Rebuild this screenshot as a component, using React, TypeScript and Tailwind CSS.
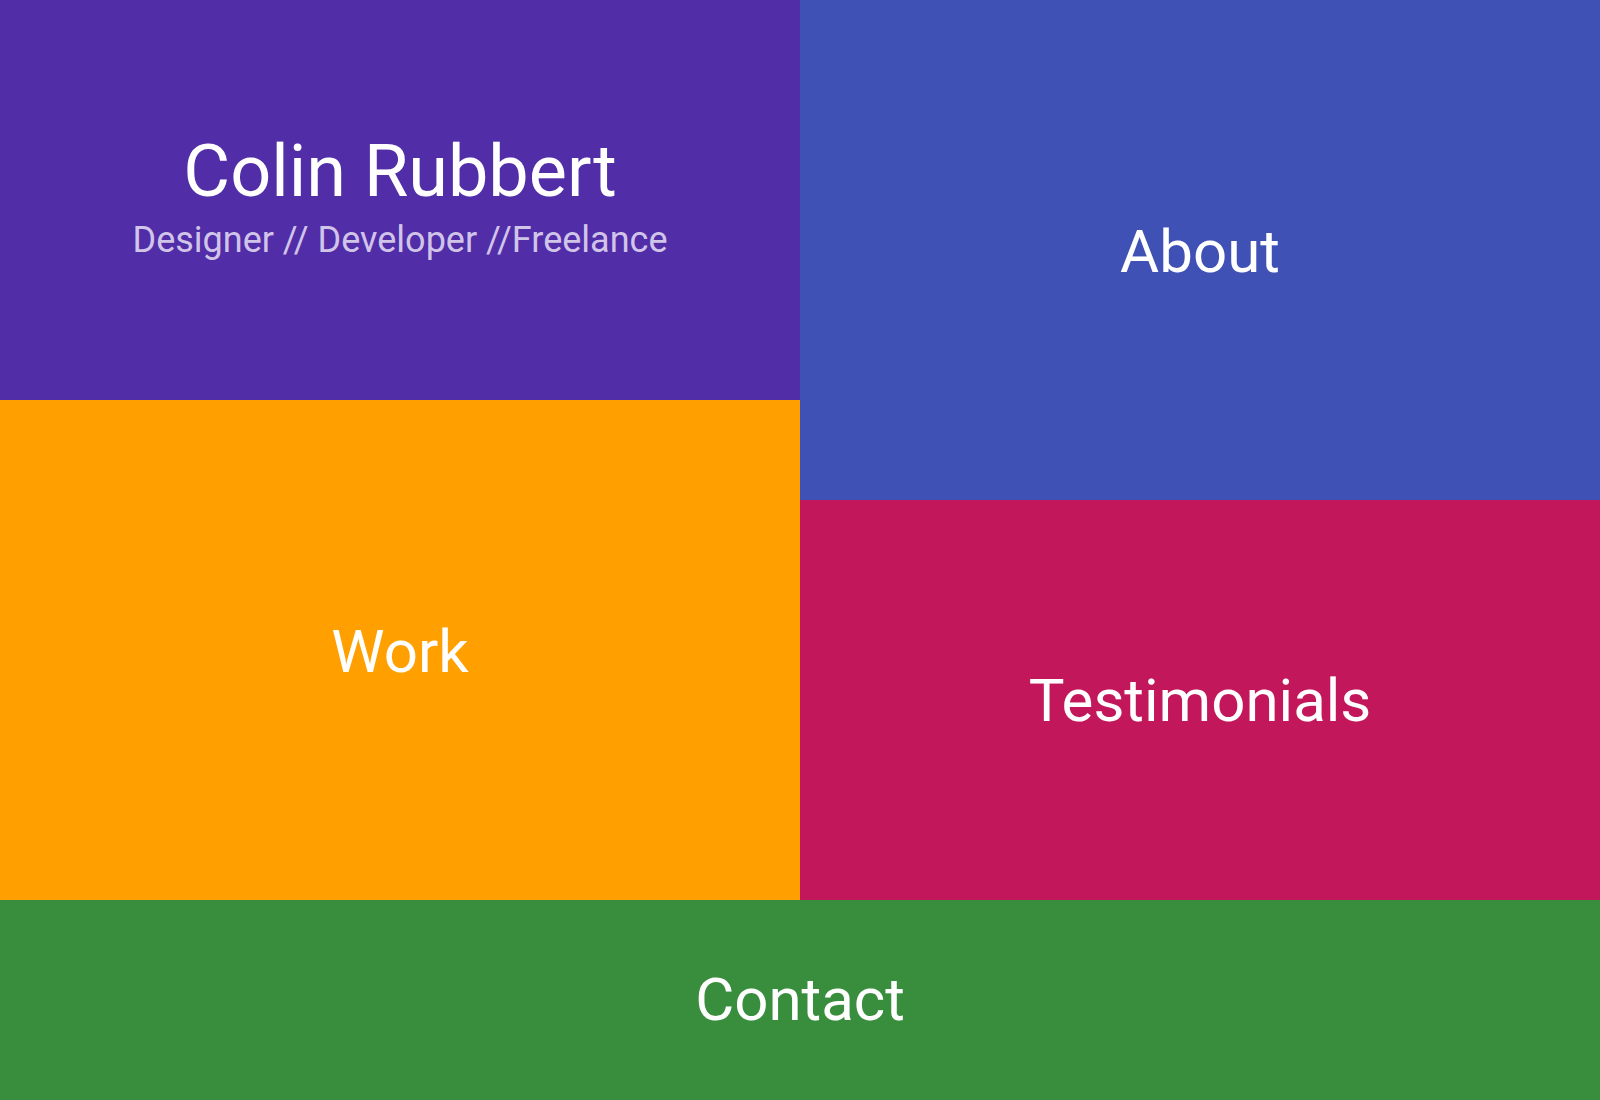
import React from 'react';

const Tile: React.FC<{ label: string; className: string }> = ({ label, className }) => (
  <a
    href="#"
    className={`flex items-center justify-center text-white text-6xl leading-none ${className}`}
  >
    {label}
  </a>
);

const App: React.FC = () => {
  return (
    <div className="w-full min-h-screen flex flex-col font-['Roboto',sans-serif]">
      <div className="flex h-[900px]">
        {/* left column */}
        <div className="w-1/2 flex flex-col">
          <header className="h-[400px] bg-[#512da8] flex flex-col items-center justify-center text-center pb-[7px]">
            <h1 className="text-7xl leading-none text-white">Colin Rubbert</h1>
            <p className="mt-[14px] text-4xl leading-none text-[#d1c4e9]">
              Designer // Developer //Freelance
            </p>
          </header>
          <Tile label="Work" className="h-[500px] bg-[#ffa000] pt-[4px]" />
        </div>

        {/* right column */}
        <div className="w-1/2 flex flex-col">
          <Tile label="About" className="h-[500px] bg-[#3f51b5] pt-[4px]" />
          <Tile label="Testimonials" className="h-[400px] bg-[#c2185b] pt-[2px]" />
        </div>
      </div>

      <Tile label="Contact" className="h-[200px] bg-[#388e3c]" />
    </div>
  );
};

export default App;
